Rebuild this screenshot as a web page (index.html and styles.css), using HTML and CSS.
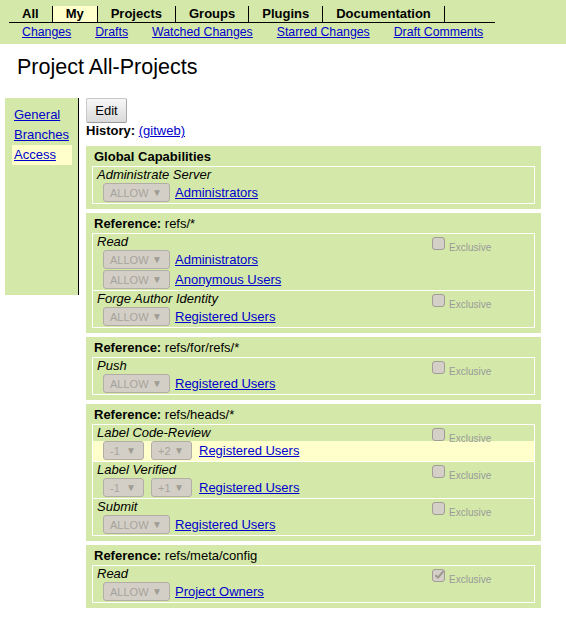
FILE: index.html
```html
<!DOCTYPE html>
<html>
<head>
<meta charset="utf-8">
<link rel="stylesheet" href="styles.css">
</head>
<body>
<div class="topbar">
  <div class="tabs">
    <span class="tab">All</span>
    <span class="tab tab-on">My</span>
    <span class="tab">Projects</span>
    <span class="tab">Groups</span>
    <span class="tab">Plugins</span>
    <span class="tab">Documentation</span>
  </div>
  <div class="submenu">
    <a href="#">Changes</a>
    <a href="#">Drafts</a>
    <a href="#">Watched Changes</a>
    <a href="#">Starred Changes</a>
    <a href="#">Draft Comments</a>
  </div>
</div>

<h1 class="title">Project All-Projects</h1>

<div class="page">
  <nav class="sidebar">
    <a class="side-item" href="#">General</a>
    <a class="side-item" href="#">Branches</a>
    <a class="side-item side-on" href="#">Access</a>
  </nav>

  <main class="main">
    <button class="edit">Edit</button>
    <div class="history"><b>History:</b> <a href="#">(gitweb)</a></div>

    <section class="sec">
      <div class="sec-head"><b>Global Capabilities</b></div>
      <div class="box">
        <div class="perm">
          <div class="perm-head"><span class="perm-name">Administrate Server</span></div>
          <div class="rule"><span class="sel sel-w"><span>ALLOW</span><i>&#9660;</i></span><a href="#">Administrators</a></div>
        </div>
      </div>
    </section>

    <section class="sec">
      <div class="sec-head"><b>Reference:</b> refs/*</div>
      <div class="box">
        <div class="perm">
          <div class="perm-head"><span class="perm-name">Read</span><span class="excl"><span class="cb"></span><span class="excl-t">Exclusive</span></span></div>
          <div class="rule"><span class="sel sel-w"><span>ALLOW</span><i>&#9660;</i></span><a href="#">Administrators</a></div>
          <div class="rule"><span class="sel sel-w"><span>ALLOW</span><i>&#9660;</i></span><a href="#">Anonymous Users</a></div>
        </div>
        <div class="perm">
          <div class="perm-head"><span class="perm-name">Forge Author Identity</span><span class="excl"><span class="cb"></span><span class="excl-t">Exclusive</span></span></div>
          <div class="rule"><span class="sel sel-w"><span>ALLOW</span><i>&#9660;</i></span><a href="#">Registered Users</a></div>
        </div>
      </div>
    </section>

    <section class="sec">
      <div class="sec-head"><b>Reference:</b> refs/for/refs/*</div>
      <div class="box">
        <div class="perm">
          <div class="perm-head"><span class="perm-name">Push</span><span class="excl"><span class="cb"></span><span class="excl-t">Exclusive</span></span></div>
          <div class="rule"><span class="sel sel-w"><span>ALLOW</span><i>&#9660;</i></span><a href="#">Registered Users</a></div>
        </div>
      </div>
    </section>

    <section class="sec">
      <div class="sec-head"><b>Reference:</b> refs/heads/*</div>
      <div class="box">
        <div class="perm">
          <div class="perm-head"><span class="perm-name">Label Code-Review</span><span class="excl"><span class="cb"></span><span class="excl-t">Exclusive</span></span></div>
          <div class="rule rule-hl"><span class="sel sel-n"><span>-1</span><i>&#9660;</i></span><span class="sel sel-n"><span>+2</span><i>&#9660;</i></span><a href="#">Registered Users</a></div>
        </div>
        <div class="perm">
          <div class="perm-head"><span class="perm-name">Label Verified</span><span class="excl"><span class="cb"></span><span class="excl-t">Exclusive</span></span></div>
          <div class="rule"><span class="sel sel-n"><span>-1</span><i>&#9660;</i></span><span class="sel sel-n"><span>+1</span><i>&#9660;</i></span><a href="#">Registered Users</a></div>
        </div>
        <div class="perm">
          <div class="perm-head"><span class="perm-name">Submit</span><span class="excl"><span class="cb"></span><span class="excl-t">Exclusive</span></span></div>
          <div class="rule"><span class="sel sel-w"><span>ALLOW</span><i>&#9660;</i></span><a href="#">Registered Users</a></div>
        </div>
      </div>
    </section>

    <section class="sec">
      <div class="sec-head"><b>Reference:</b> refs/meta/config</div>
      <div class="box">
        <div class="perm">
          <div class="perm-head"><span class="perm-name">Read</span><span class="excl"><span class="cb cb-on"><svg viewBox="0 0 12 12" width="12" height="12"><path d="M2.5 6.2 L5 8.6 L10.5 2.2" fill="none" stroke="#9a968e" stroke-width="2"/></svg></span><span class="excl-t">Exclusive</span></span></div>
          <div class="rule"><span class="sel sel-w"><span>ALLOW</span><i>&#9660;</i></span><a href="#">Project Owners</a></div>
        </div>
      </div>
    </section>
  </main>
</div>
</body>
</html>
```

FILE: styles.css
```css
body {
  margin: 0;
  font-family: "Liberation Sans", Arial, sans-serif;
  font-size: 13px;
  color: #000;
  background: #fff;
}
a { color: #0000cc; }

.topbar {
  background: #d4e9a9;
  height: 44px;
  box-sizing: border-box;
  padding: 6px 0 0 9px;
}
.tabs {
  display: flex;
  width: 486px;
  border-bottom: 1px solid #000;
}
.tab {
  font-weight: bold;
  line-height: 16px;
  padding: 0 13px;
  border-right: 1px solid #000;
}
.tab-on { background: #ffffcc; }
.submenu {
  display: flex;
  gap: 24px;
  padding-left: 13px;
  font-size: 12.3px;
  line-height: 18px;
}

.title {
  font-size: 21.5px;
  font-weight: normal;
  line-height: 26px;
  margin: 10px 0 18px 17px;
}

.page {
  display: flex;
  align-items: flex-start;
  padding-left: 5px;
}
.sidebar {
  width: 74px;
  height: 197px;
  box-sizing: border-box;
  background: #d4e9a9;
  border-right: 1px solid #000;
  padding: 7px 6px 0 7px;
}
.side-item {
  display: block;
  height: 20px;
  line-height: 20px;
  padding-left: 2px;
}
.side-on { background: #ffffcc; }

.main {
  margin-left: 7px;
  width: 455px;
}
.edit {
  display: block;
  width: 41px;
  height: 25px;
  font-family: "Liberation Sans", Arial, sans-serif;
  font-size: 13px;
  color: #000;
  background: linear-gradient(#f7f7f7, #dadada);
  border: 1px solid #c8c8c8;
  border-bottom-color: #9c9c9c;
  border-right-color: #a8a8a8;
  border-radius: 2px;
  padding: 0;
}
.history {
  line-height: 16px;
  margin-bottom: 7px;
}

.sec {
  background: #d4e9a9;
  padding: 0 6px 5px 6px;
  margin-bottom: 4px;
}
.sec-head {
  height: 20px;
  line-height: 21px;
  padding-left: 2px;
}
.box {
  border: 1px solid #fff;
}
.perm + .perm { border-top: 1px solid #fff; }
.perm-head {
  display: flex;
  height: 16px;
}
.perm-name {
  flex: 1;
  font-style: italic;
  line-height: 15px;
  padding-left: 4px;
}
.excl {
  flex: 0 0 102px;
  display: flex;
  align-items: flex-end;
  padding-top: 3px;
  height: 13px;
}
.cb {
  width: 11px;
  height: 11px;
  background: #d4d0c8;
  border: 1px solid #a09c96;
  border-radius: 3px;
  position: relative;
}
.cb svg { position: absolute; left: 0; top: -1px; }
.excl-t {
  font-size: 10px;
  line-height: 10px;
  color: #9a9a9a;
  margin-left: 4px;
  margin-bottom: -3px;
}
.rule {
  display: flex;
  align-items: flex-start;
  height: 20px;
  padding-left: 10px;
}
.rule-hl { background: #ffffcc; }
.rule a { line-height: 19px; }
.sel {
  display: flex;
  align-items: center;
  justify-content: space-between;
  box-sizing: border-box;
  height: 19px;
  margin-right: 5px;
  padding: 0 7px 0 6px;
  background: #d3cfc7;
  border: 1px solid #b2aea6;
  border-radius: 3px;
  color: #a7a39b;
  font-size: 11px;
}
.sel i {
  font-style: normal;
  font-size: 10px;
  color: #a09c94;
}
.sel-w { width: 67px; }
.sel-n { width: 41px; margin-right: 7px; }
```
